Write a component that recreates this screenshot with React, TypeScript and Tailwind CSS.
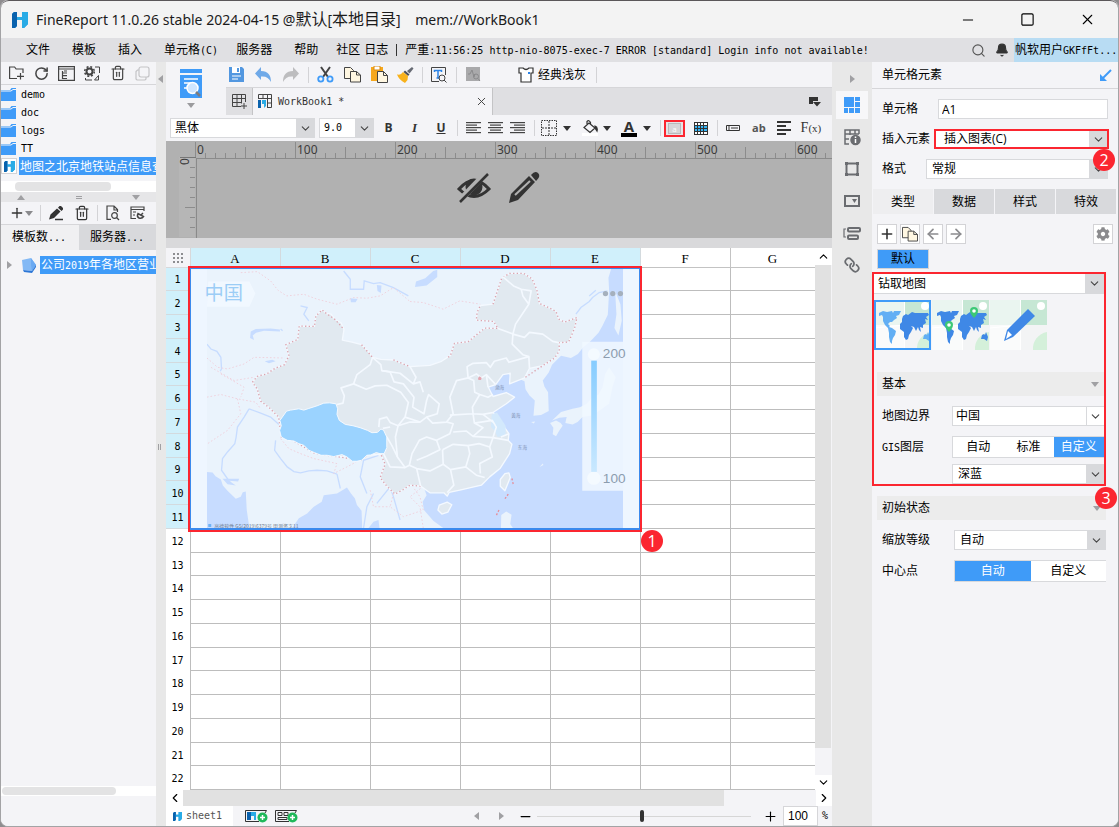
import React from "react";
import { Bell, ChevronDown, ChevronLeft, ChevronRight, ChevronUp, Link, Minus, Plus, RotateCw, Search, Square, Trash2, X, ArrowLeft, ArrowRight } from "lucide-react";
import { FaCog } from "react-icons/fa";

const MONO = "font-['DejaVu_Sans_Mono','Noto_Sans_CJK_SC',monospace] text-[10px]";

const Sep = () => <span className="h-4 w-px shrink-0 bg-[#d3d3d6]" />;

function Caret({ className = "" }: { className?: string }) {
  return (
    <svg width="8" height="5" viewBox="0 0 8 5" className={`shrink-0 ${className}`} aria-hidden>
      <path d="M0 0h8L4 5z" fill="currentColor" />
    </svg>
  );
}

function SideCaret({ left = false }: { left?: boolean }) {
  return (
    <svg width="5" height="8" viewBox="0 0 5 8" className="shrink-0 text-[#a0a0a3]" aria-hidden>
      <path d={left ? "M5 0v8L0 4z" : "M0 0v8l5-4z"} fill="currentColor" />
    </svg>
  );
}

function Logo({ size }: { size: number }) {
  return (
    <svg width={size} height={size} viewBox="0 0 16 16" aria-hidden>
      <path d="M0 2l2-2h3v5h5V0h6v12l-4 4h-2V8H5v6l-2 2H0z" fill="#1593dc" />
      <path d="M0 2l2-2h3v14l-2 2H0z" fill="#0a62ad" />
      <path d="M5 5h5V0h6v12l-4 4h-2V8H5z" fill="#29abe6" />
    </svg>
  );
}

function CopyIcon({ size = 17 }: { size?: number }) {
  return (
    <svg width={size} height={size} viewBox="0 0 17 17" fill="#fff7e2" stroke="#444" aria-hidden>
      <path d="M.5 1.500h6l3 3v8h-9z" />
      <path d="M6.500 5.500h6l4 3.500v7h-10z" />
      <path d="M12.500 5.500v3.500h4" fill="none" />
    </svg>
  );
}

function FolderIcon() {
  return (
    <svg width="15" height="13" viewBox="0 0 15 13" className="shrink-0" aria-hidden>
      <path d="M0 2h9l1.500-2H15v13H0z" fill="#3f9bf8" />
      <path d="M0 3h10l2-1.500h3" stroke="#f4f4f7" fill="none" />
    </svg>
  );
}

function Lines({ align }: { align: "left" | "center" | "right" }) {
  const rows = [15, 11, 15, 11, 15];
  return (
    <svg width="15" height="12" viewBox="0 0 15 12" aria-hidden>
      {rows.map((w, i) => {
        const x = align === "left" ? 0 : align === "right" ? 15 - w : (15 - w) / 2;
        return <rect key={i} x={x} y={i * 2.5} width={w} height="1.200" fill="#444" />;
      })}
    </svg>
  );
}

function Dropdown({ id, label, options, box = "bg-[#d8d9dc]", pad = "pl-1", className = "h-5 border" }: {
  id: string; label?: string; options: string[]; box?: string; pad?: string; className?: string;
}) {
  return (
    <div className={`relative flex border-[#d8d9dc] bg-white ${className}`}>
      <select id={id} aria-label={label} className={`w-full min-w-0 appearance-none bg-transparent pr-5 outline-none ${pad}`}>
        {options.map((o) => <option key={o}>{o}</option>)}
      </select>
      <span className={`pointer-events-none absolute inset-y-0 right-0 flex w-[18px] items-center justify-center ${box}`}>
        <ChevronDown size={13} strokeWidth={2} className="text-[#444]" />
      </span>
    </div>
  );
}

function Badge({ n, className }: { n: number; className: string }) {
  return (
    <span className={`absolute z-20 flex size-[22px] items-center justify-center rounded-full bg-[#fb2630] font-['Open_Sans',sans-serif] text-base leading-none text-white ${className}`}>
      {n}
    </span>
  );
}

/* ---------- title + menu ---------- */

function TitleBar() {
  return (
    <header className="flex h-[38px] items-center rounded-t-lg border-t border-[#5a5759] bg-[#f3f3f3] pl-[11px] pr-[22px]">
      <Logo size={16} />
      <h1 className="ml-2 whitespace-pre font-['Noto_Sans','Noto_Sans_CJK_SC',sans-serif] text-[14px] text-[#1b1b1b]">
        FineReport 11.0.26 stable 2024-04-15 @<span className="text-[16px]">默认</span>[<span className="text-[16px]">本地目录</span>]    mem://WorkBook1
      </h1>
      <div className="ml-auto flex items-center gap-[44px]">
        <button aria-label="最小化"><Minus size={16} strokeWidth={1.5} /></button>
        <button aria-label="最大化"><Square size={15} strokeWidth={1.8} /></button>
        <button aria-label="关闭"><X size={17} strokeWidth={1.5} /></button>
      </div>
    </header>
  );
}

function MenuBar() {
  return (
    <nav className="flex h-6 items-center bg-[#e0e0e3] pl-[25px]">
      <div className="flex items-center gap-[22px] whitespace-nowrap">
        <button>文件</button>
        <button>模板</button>
        <button>插入</button>
        <button className="-mr-1">单元格<span className={MONO}>(C)</span></button>
        <button>服务器</button>
        <button>帮助</button>
        <button className="-ml-1">社区</button>
      </div>
      <button className="ml-1 whitespace-nowrap">日志</button>
      <span className="ml-2 h-3 w-px bg-[#333]" />
      <p className="ml-2 truncate">
        严重<span className={MONO}>:11:56:25 http-nio-8075-exec-7 ERROR [standard] Login info not available!</span>
      </p>
      <div className="ml-auto flex h-full shrink-0 items-center">
        <button aria-label="搜索"><Search size={15} strokeWidth={1.8} className="text-[#555]" /></button>
        <button aria-label="通知" className="ml-[9px] mr-[5px]"><Bell size={14} className="fill-[#333] text-[#333]" /></button>
        <button className="h-full w-[104px] overflow-hidden whitespace-nowrap bg-[#b8dcf3] pl-px text-left">
          帆软用户<span className={MONO}>GKFfFt...</span>
        </button>
      </div>
    </nav>
  );
}

/* ---------- left side ---------- */

function LeftPanel() {
  return (
    <aside className="flex w-[155px] shrink-0 flex-col overflow-hidden bg-[#f4f4f7]">
      <div className="flex h-[23px] items-center gap-[9px] border-b border-[#d6d6d9] px-2 text-[#444]">
        <button aria-label="新建文件夹">
          <svg width="16" height="14" viewBox="0 0 16 14" fill="none" stroke="#444" strokeWidth="1.200">
            <path d="M8 12.500H.600V1h5l1.500 2H14V7M11.500 7v6.500M8 10.300h7" />
          </svg>
        </button>
        <button aria-label="刷新"><RotateCw size={15} strokeWidth={2.4} /></button>
        <button aria-label="打开目录">
          <svg width="17" height="15" viewBox="0 0 17 15" fill="none" stroke="#444" strokeWidth="1.200">
            <path d="M.600.600h15.800v13.800H.600zM.600 3h15.800M4.500 5v7.500H9M4.500 7H9M4.500 9.700H9M6 5h3" />
          </svg>
        </button>
        <button aria-label="设置目录">
          <svg width="17" height="15" viewBox="0 0 17 15" fill="none" stroke="#444">
            <circle cx="5.500" cy="5.500" r="3" strokeWidth="2" />
            <circle cx="5.500" cy="5.500" r="4.800" strokeDasharray="2 1.800" strokeWidth="1.500" />
            <path d="M11 1h4.500v6M1.500 12v2H8M14.500 9.500l-4 4.500h4z" />
          </svg>
        </button>
        <button aria-label="删除"><Trash2 size={16} strokeWidth={1.8} /></button>
        <button aria-label="重命名">
          <svg width="15" height="15" viewBox="0 0 15 15" fill="none" stroke="#c3c3c6" strokeWidth="1.200">
            <rect x="4" y="1" width="10" height="10" rx="2" /><path d="M4 4H2.500L1 5.500V13l1 1h8l1-1v-2" />
          </svg>
        </button>
      </div>
      <ul className={MONO}>
        {["demo", "doc", "logs", "TT"].map((name) => (
          <li key={name} className="flex h-[18px] items-center gap-[5px] pt-px"><FolderIcon />{name}</li>
        ))}
        <li className="flex h-[18px] items-center">
          <span className="flex size-4 shrink-0 items-center justify-center border border-[#d3d3d6] bg-white"><Logo size={11} /></span>
          <span className="ml-[2px] h-[18px] whitespace-nowrap bg-[#3f9bf8] pl-px font-['Noto_Sans_CJK_SC',sans-serif] text-xs leading-[17px] text-white">地图之北京地铁站点信息查询</span>
        </li>
      </ul>
      <div className="mt-[6px] h-[11px] bg-white px-[14px] py-px"><div className="h-[9px] w-24 rounded bg-[#e3e3e4]" /></div>
      <div className="flex h-[10px] items-center justify-between bg-[#e6e6e8] px-4 text-[#a0a0a3]">
        <Caret className="rotate-180" /><span className="h-[3px] w-[6px] border-y border-[#a0a0a3]" /><Caret />
      </div>
      <div className="flex h-[22px] items-center px-2 text-[#333]">
        <button aria-label="添加数据集" className="flex items-center"><Plus size={16} strokeWidth={2} /><Caret className="text-[#8a8a8d]" /></button>
        <span className="ml-[7px] flex"><Sep /></span>
        <button aria-label="编辑" className="ml-2">
          <svg width="15" height="15" viewBox="0 0 15 15" fill="#333">
            <path d="M0 13.500l1.500-5L8 2.500l3.500 3L5 12zM9 1.700L10.500 0H12l2 2v1.500L12.500 5zM6 12.800h8v1.400H6z" />
          </svg>
        </button>
        <button aria-label="删除数据集" className="ml-[10px]"><Trash2 size={16} strokeWidth={1.8} /></button>
        <span className="ml-[7px] flex"><Sep /></span>
        <button aria-label="预览" className="ml-[8px]">
          <svg width="14" height="16" viewBox="0 0 14 16" fill="none" stroke="#444" strokeWidth="1.200">
            <path d="M5 14.400H1V1h7l3.500 3.500V7M8 1v4h3" /><circle cx="8.500" cy="10.500" r="2.800" /><path d="M10.500 12.500l2.500 2.500" />
          </svg>
        </button>
        <button aria-label="数据源" className="ml-[10px]">
          <svg width="15" height="14" viewBox="0 0 15 14" fill="none" stroke="#444" strokeWidth="1.200">
            <path d="M6 12.500H1V1h13v4M1 3.500h13M3 6h3M3 9h2" /><path d="M13 7l-2 2M8 7.500q-1.500 3 1 4.500 3 1 4.500-1.500z" strokeWidth="1.500" />
          </svg>
        </button>
      </div>
      <div className="flex h-[26px] border-t border-[#d6d6d9]" role="tablist">
        <button role="tab" aria-selected="true" className="w-[78px] whitespace-nowrap bg-[#f0f0f2] pl-[11px] text-left">模板数<span className={MONO}>...</span></button>
        <button role="tab" aria-selected="false" className="flex-1 whitespace-nowrap bg-[#d8d9dc] pl-[11px] text-left">服务器<span className={MONO}>...</span></button>
      </div>
      <div className="mt-[6px] flex h-[18px] items-center pl-[6px]">
        <SideCaret />
        <svg width="16" height="16" viewBox="0 0 16 16" className="ml-[9px] shrink-0" aria-hidden>
          <path d="M1 3l9-2 5 7-4 6-9-1z" fill="#83b9f5" /><path d="M10 1l5 7-4 6-1-6z" fill="#6aa9f2" /><path d="M2 13l9 1 4-6v2l-4 6-8-1z" fill="#2c76d6" />
        </svg>
        <span className="ml-[3px] h-[18px] whitespace-nowrap bg-[#3f9bf8] pl-px leading-[17px] text-white">公司<span className={MONO}>2019</span>年各地区营业额</span>
      </div>
      <div className="min-h-[511px] flex-1" />
      <div className="h-[10px] bg-white px-px py-px"><div className="h-2 w-[114px] rounded bg-[#e3e3e4]" /></div>
      <div className="h-[30px]" />
    </aside>
  );
}

/* ---------- toolbars ---------- */

function MainToolbar() {
  return (
    <div className="flex h-[25px] items-center">
      <button aria-label="保存" className="ml-[2px]">
        <svg width="17" height="17" viewBox="0 0 17 17">
          <path d="M1 1h13l2 2v13H1z" fill="#5297e0" /><path d="M4 1h8v6H4z" fill="#fff" /><path d="M9 2h2v4H9z" fill="#5297e0" /><path d="M4 10h9M4 13h6" stroke="#fff" />
        </svg>
      </button>
      <button aria-label="撤销" className="ml-[10px]">
        <svg width="17" height="15" viewBox="0 0 17 15"><path d="M6 0v4c7 0 10 4 10 11-2-4-5-6-10-5.500V13L0 6.500z" fill="#6fa9e8" /></svg>
      </button>
      <button aria-label="重做" className="ml-[10px] mr-[9px]">
        <svg width="17" height="15" viewBox="0 0 17 15"><path d="M11 0v4C4 4 1 8 1 15c2-4 5-6 10-5.500V13l6-6.500z" fill="#bdbdbf" /></svg>
      </button>
      <Sep />
      <button aria-label="剪切" className="ml-2">
        <svg width="17" height="17" viewBox="0 0 17 17" fill="none">
          <path d="M4 1l7 10M13 1L6 11" stroke="#444" strokeWidth="2" />
          <circle cx="3.800" cy="13" r="2.600" stroke="#3f9bf8" strokeWidth="1.800" /><circle cx="13" cy="13" r="2.600" stroke="#3f9bf8" strokeWidth="1.800" />
        </svg>
      </button>
      <button aria-label="复制" className="ml-[10px]"><CopyIcon /></button>
      <button aria-label="粘贴" className="ml-[10px]">
        <svg width="17" height="17" viewBox="0 0 17 17">
          <path d="M0 1h12v14H0z" fill="#f6a81c" /><path d="M3 0h6v4H3z" fill="#fff" stroke="#d98a10" />
          <path d="M6.500 5.500h6l4 4v7h-10z" fill="#fff7e2" stroke="#444" /><path d="M12.500 5.500v4h4" fill="none" stroke="#444" />
        </svg>
      </button>
      <button aria-label="格式刷" className="ml-[9px] mr-2">
        <svg width="17" height="17" viewBox="0 0 17 17">
          <path d="M10 5l5-4 1.500 1.500-4 5z" fill="#666a73" /><path d="M8 4.500l4.500 4L11 10 6.500 6z" fill="#4b4f57" /><path d="M6 6l5 4-.500 4L8 17Q2 14 0 8.500c3 .5 4.500-.5 6-2.500z" fill="#f8b21c" />
        </svg>
      </button>
      <Sep />
      <button aria-label="查找" className="ml-2 mr-[9px]">
        <svg width="16" height="16" viewBox="0 0 16 16" fill="none" stroke="#444">
          <path d="M8 14.500H.500V.500h14V8" /><path d="M3.500 5V3.500h7V5M7 3.500V11M5.500 11h3" stroke="#2b83e6" strokeWidth="1.500" /><circle cx="11" cy="11" r="3" /><path d="M13 13l2.500 2.500" />
        </svg>
      </button>
      <Sep />
      <button aria-label="性能" className="ml-[9px]">
        <svg width="15" height="15" viewBox="0 0 15 15" fill="none">
          <path d="M0 0h14v14H0z" fill="#a9a9ab" /><path d="M2 7h2l2-4 2 7 1-3" stroke="#8a8a8c" /><circle cx="10" cy="9.500" r="2.500" stroke="#8a8a8c" /><path d="M12 11.500l2 2.500" stroke="#8a8a8c" />
        </svg>
      </button>
      <button className="ml-[37px] mr-[10px] flex items-center gap-1 whitespace-nowrap">
        <svg width="16" height="16" viewBox="0 0 16 16" fill="#fff" stroke="#333" strokeWidth="1.200">
          <path d="M1 1h4q3 3 6 0h4v5h-2v9H3V6H1z" /><path d="M10 6h2" stroke="#2b83e6" strokeWidth="2" />
        </svg>
        经典浅灰
      </button>
      <Sep />
    </div>
  );
}

function WorkbookTabs() {
  return (
    <div className="flex h-7 items-stretch border-t border-[#d6d6d9] bg-[#dfdfe2]">
      <button aria-label="新建模板" className="flex w-[27px] items-center justify-center border-r border-[#c4c4c6]">
        <svg width="15" height="15" viewBox="0 0 15 15" fill="none" stroke="#444"><path d="M9 12.500H.500V.500h13V8M.500 4.500h13M.500 8.500H9M5 .500v12M9.500.500v9M12 9v6M9 12h6" /></svg>
      </button>
      <div className="flex w-[240px] items-center border-r border-[#c4c4c6] bg-[#f4f4f7] pl-[5px]">
        <svg width="14" height="15" viewBox="0 0 14 15" fill="none" stroke="#444" aria-hidden>
          <path d="M.500 5V.500h13v13H9M.500 4.500h13M9 9h4.500M5 .500v4M9.500.500V13" /><path d="M0 6h3v8H0z" fill="#0a62ad" stroke="none" /><path d="M4 6h4v6l-2 2v-4H4z" fill="#29abe6" stroke="none" />
        </svg>
        <span className={`ml-[6px] text-[#333] ${MONO}`}>WorkBook1 *</span>
        <button aria-label="关闭标签" className="ml-auto mr-1"><X size={13} strokeWidth={1.8} className="text-[#444]" /></button>
      </div>
      <button aria-label="标签列表" className="ml-auto mr-[11px]">
        <svg width="12" height="10" viewBox="0 0 12 10" fill="#333"><path d="M0 0h9v4H4v3H0zM4 5h8l-4 4.500z" /></svg>
      </button>
    </div>
  );
}

function FormatBar() {
  return (
    <div className="flex h-[26px] items-center pl-1 text-[#333]">
      <Dropdown id="font" label="字体" options={["黑体"]} className="h-5 w-[145px] border text-black" />
      <Dropdown id="size" label="字号" options={["9.0"]} className="ml-1 h-5 w-[55px] border font-['DejaVu_Sans_Mono',monospace] text-[10px] text-black" />
      <button aria-label="加粗" className="ml-[10px] w-[9px] font-['Open_Sans',sans-serif] text-[12px] font-bold">B</button>
      <button aria-label="斜体" className="ml-[17px] w-[9px] font-['Liberation_Serif',serif] text-[13px] font-bold italic">I</button>
      <button aria-label="下划线" className="ml-[17px] w-[10px] font-['Open_Sans',sans-serif] text-[12px] font-bold underline">U</button>
      <span className="ml-[11px] mr-2 flex"><Sep /></span>
      <div className="flex gap-[7px]">
        <button aria-label="左对齐"><Lines align="left" /></button>
        <button aria-label="居中"><Lines align="center" /></button>
        <button aria-label="右对齐"><Lines align="right" /></button>
      </div>
      <span className="ml-[9px] mr-[6px] flex"><Sep /></span>
      <button aria-label="边框" className="flex items-center gap-[6px]">
        <svg width="16" height="16" viewBox="0 0 16 16" fill="none" stroke="#333"><path d="M.500.500h15v15H.500z" strokeDasharray="1.500 1" /><path d="M8 1v14M1 8h14" strokeDasharray="2 1" /></svg>
        <Caret />
      </button>
      <button aria-label="背景色" className="ml-[11px] flex items-center gap-[5px]">
        <svg width="16" height="16" viewBox="0 0 16 16" fill="none" stroke="#333" strokeWidth="1.200"><path d="M0 13h16v3H0z" fill="#fff" stroke="none" /><path d="M7 3l6 5-5 4.500L2 7.500zM5 5V1.500q2-2 3.500 1V5" /><path d="M13 6q3 1 2 5l-2-3z" fill="#333" /></svg>
        <Caret />
      </button>
      <button aria-label="字体颜色" className="ml-[10px] flex items-center gap-[6px]">
        <span className="w-4 border-b-4 border-black text-center font-['Open_Sans',sans-serif] text-[15px] leading-[13px] font-bold">A</span>
        <Caret />
      </button>
      <span className="ml-[9px] mr-[3px] flex"><Sep /></span>
      <button aria-label="合并单元格" className="flex h-[17px] w-[21px] items-center justify-center border-2 border-[#fb2630] bg-[#e4e4e6]">
        <span className="h-[11px] w-[13px] border border-[#b9b9bb] bg-[#d6d6d8] text-center text-[8px] leading-[9px] text-white">a</span>
      </button>
      <button aria-label="表格" className="ml-[9px]">
        <svg width="14" height="13" viewBox="0 0 14 13">
          <path d="M0 0h14v13H0z" fill="#333" />
          {[1, 4, 7, 10].map((y) => [1, 4, 7, 10].map((x) => (
            <rect key={`${x}-${y}`} x={x} y={y} width={x === 10 ? 3 : 2} height="2" fill={y === 1 || y === 10 ? "#fff" : "#35b5f5"} />
          )))}
        </svg>
      </button>
      <span className="ml-[9px] mr-[8px] flex"><Sep /></span>
      <button aria-label="控件">
        <svg width="14" height="6" viewBox="0 0 14 6" fill="none" stroke="#333"><path d="M.500.500h13v5H.500zM3 1v4M5 3h7" /></svg>
      </button>
      <button aria-label="文本" className="ml-3 font-['Open_Sans',sans-serif] text-[11px] font-bold text-[#555]">ab</button>
      <button aria-label="段落" className="ml-[11px]">
        <svg width="14" height="14" viewBox="0 0 14 14" stroke="#333" strokeWidth="2"><path d="M0 1h14M0 5h9M0 9h14M0 13h9" /></svg>
      </button>
      <button aria-label="公式" className="ml-[10px] font-['Liberation_Serif',serif] text-[14px]">F<span className="text-[11px]">(x)</span></button>
    </div>
  );
}

/* ---------- parameter pane with rulers ---------- */

function RulerPane() {
  const ticks = Array.from({ length: 200 }, (_, i) => i);
  return (
    <div className="h-[97px] overflow-hidden bg-[#b1b1b1]">
      <svg width="100%" height="97" aria-hidden>
        <path d="M13 16H29V96H13z" fill="#b6b6b6" />
        <g stroke="#8c8c8c">
          {ticks.map((i) => (
            <path key={i} d={`M${29.5 + i * 10} ${i % 10 === 0 ? 1 : i % 5 === 0 ? 6 : 12}V17`} />
          ))}
          {[1, 2, 3, 4, 5, 6, 7].map((i) => (
            <path key={i} d={`M${i === 5 ? 19 : 24} ${16.5 + i * 10}H29`} />
          ))}
          <path d="M14 16.500H30" stroke="#777" />
          <path d="M30 17.500H3000M30.500 17V97" stroke="#8a8a8a" />
        </g>
        <g fill="#3c3c3c" fontFamily="Noto Sans, sans-serif" fontSize="12">
          {[0, 100, 200, 300, 400, 500, 600, 700, 800, 900, 1000].map((n) => (
            <text key={n} x={31 + n} y="13">{n}</text>
          ))}
          <text transform="translate(23 17) rotate(-90)" textAnchor="end">0</text>
        </g>
        <g transform="translate(291 31)" fill="none" stroke="#333" strokeWidth="3">
          <path d="M2 17Q17 0 32 17Q17 32 2 17z" />
          <circle cx="17" cy="15" r="7" fill="#333" />
          <path d="M30 0L3 28" stroke="#b1b1b1" strokeWidth="6" /><path d="M31 2L3 30" strokeWidth="2.500" />
        </g>
        <g transform="translate(342 31)" fill="#333">
          <path d="M1 31l2-9L21 4l6 6L10 28zM23 3q4-5 7-2t-1 7l-1 1z" /><path d="M7 23L22 9" stroke="#b1b1b1" strokeWidth="2" />
        </g>
      </svg>
    </div>
  );
}

/* ---------- chart ---------- */

const CHINA = "M275 425L290 407 318 400 345 382 372 372 385 345 376 312 412 296 416 256 462 257 466 226 485 207 498 218 512 220 524 236 542 246 551 266 546 298 575 304 604 312 622 330 637 350 662 356 700 358 750 378 810 374 845 362 872 344 884 308 925 303 958 276 975 262 1015 263 1002 242 950 238 952 215 962 194 1000 190 1014 148 1026 112 1050 97 1092 97 1118 114 1132 146 1140 188 1168 200 1190 212 1198 235 1216 244 1253 230 1246 262 1228 304 1199 306 1200 330 1186 352 1150 375 1110 383 1095 412 1050 430 1052 398 1030 402 1008 432 986 440 1000 468 1040 456 1065 470 1040 490 1000 516 1024 546 1048 580 1046 600 1057 612 1050 640 1022 684 990 710 965 735 900 750 868 757 862 768 852 758 810 758 782 738 750 735 730 748 705 762 680 738 660 712 675 672 662 642 620 645 588 665 556 650 500 645 460 638 400 602 362 590 354 530 326 502 300 482 290 446z";
const TIBET = "M358 540L378 512 390 509 415 505 430 509 445 504 470 496 490 488 507 487 527 490 532 505 530 522 537 540 555 552 578 556 600 562 622 570 635 577 652 576 662 566 670 569 680 590 680 622 672 640 660 640 648 637 632 644 620 645 604 660 590 663 576 663 560 650 545 643 520 649 500 645 482 645 462 637 445 630 430 615 415 610 400 602 380 600 362 590 357 570 362 556z";

// the outline without the coast, where the frontier is dashed in red
const FRONTIER = "M275 425L290 407 318 400 345 382 372 372 385 345 376 312 412 296 416 256 462 257 466 226 485 207 498 218 524 236 551 266M604 312L637 350M700 358L750 378M865 350L872 344 884 308 925 303 958 276 975 262 1015 263 1002 242 950 238 952 215 962 194M1000 190L1014 148 1026 112 1050 97 1092 97 1118 114 1132 146 1140 188 1168 200 1190 212 1198 235 1216 244 1253 230 1246 262 1228 304 1199 306 1200 330 1186 352 1150 375 1095 412M782 738L750 735 730 748 705 762 680 738 660 712 675 672 662 642M604 660L500 645 460 638 400 602 362 590 354 530 326 502 300 482 290 446 275 425";

const BORDERS = [
  "M637 350L630 372 590 402 580 430 542 442 552 466 548 488 530 492",
  "M580 430L618 446 645 436 680 434 722 455 745 486 735 530 714 556 690 546 680 530 658 536 656 560",
  "M637 350L662 372 665 390 690 394 702 424 730 430 762 470 758 500 792 520 800 480 806 462 838 490 832 520 800 530",
  "M665 390L720 398 760 430 780 424 790 455M750 378L768 410 760 430",
  "M735 530L780 545 800 530 818 548 860 545 880 520 870 470 890 420 925 412 922 378 940 368 980 366 992 380 1004 362 1040 352 1048 365 1108 348",
  "M925 412L942 420 945 455 960 462 938 500 940 520 870 524M960 462L985 470 1000 462M940 520L970 522 1000 516",
  "M925 412L950 400 965 412 980 402 985 440M980 402L1008 432",
  "M680 590L695 615 712 650 735 682 748 675 756 640 778 600 800 590 830 600 870 580 880 550 862 545",
  "M670 640L690 680 735 682M748 675L770 685 782 738M770 660L800 648 840 628 830 600M770 685L810 692 850 672 848 628",
  "M848 628L880 612 925 616 930 640 918 680 872 688 850 672M872 688L882 735 862 757M918 680L950 705 975 712",
  "M925 616L958 610 990 620 998 650 960 670 962 700M990 620L1000 592 1046 600M1000 592L940 588 920 572 880 575",
  "M940 520L944 548 970 562 940 588M944 548L998 540 1010 560 1000 592M970 522L1000 545M1024 590L1048 580",
  "M1015 263L1060 280 1068 250 1108 190 1090 165 1085 145 1062 135 1030 108M1108 190L1115 150 1085 145",
  "M1060 280L1095 290 1110 275 1150 280 1180 302 1199 306M1060 280L1058 310 1090 342 1108 348 1110 383",
  "M714 556L750 545 780 545M714 556L706 590 712 650M668 564L690 560",
];

const WATER = [
  "M138 310L150 325 168 332 180 350 182 385 178 392M360 265L366 270",
  "M265 505L250 530 230 560 226 590 222 610 200 635 185 655 182 690 210 730M265 505L300 518 330 530 355 552",
  "M345 600L342 630 360 655 380 680 400 694 420 698 445 692 470 690 500 692 530 702M530 702L540 745",
  "M420 195L440 200 430 220 445 240M550 90L570 115 570 145 610 145 612 120 640 128 660 125 700 140 745 165",
  "M620 760L600 710 610 660 655 645M640 760L620 800 610 864M650 790L690 740 700 770 720 840",
  "M1250 220L1265 200 1290 182 1300 170 1320 155 1345 150M1290 165L1310 148",
];

const HAZY = [
  "M240 95L290 92 330 120 352 148 378 165 430 160 470 175 530 190 580 170 620 172 660 165 700 140 750 182",
  "M138 352L170 380 200 385 250 370 280 350 372 352M138 470L180 462 230 475 285 485 300 505",
  "M230 475L240 520 200 570 140 610M750 182L790 185 850 205 900 180 962 190",
  "M360 595L385 625 420 640 460 655 530 670 520 700 560 680 620 648M700 760L690 800 730 830 790 810 780 770 760 742",
  "M790 738L750 770 780 800 790 864M630 750L640 800 690 800M150 380L220 420 280 410M180 400L250 440 240 470",
];

function MapChart() {
  return (
    <svg viewBox="90 84 1350 780" preserveAspectRatio="none" className="block size-full" role="img" aria-label="中国">
      <defs>
        <linearGradient id="legend-bar" x1="0" y1="0" x2="0" y2="1">
          <stop offset="0%" stopColor="#86ccff" />
          <stop offset="100%" stopColor="#c9e8ff" />
        </linearGradient>
        <clipPath id="tiles"><path d="M138 84H1392V864H138z" /></clipPath>
      </defs>
      <path d="M90 84H1440V864H90z" fill="#eef6ff" />
      <g clipPath="url(#tiles)">
        <path d="M138 84H1392V864H138z" fill="#eaf3fc" />
        <g fill="#c7dcff">
          <path d="M138 695L155 697 164 708 180 718 186 736 200 752 225 776 240 770 246 756 255 754 258 810 266 864H138z" />
          <path d="M395 864L415 835 440 820 460 800 484 785 490 765 530 760 560 742 572 760 584 775 590 795 604 812 606 864zM625 864L640 845 655 840 658 864z" />
          <path d="M790 738L800 765 788 785 792 810 820 842 850 864H1392V84H1356L1348 110 1350 150 1346 222 1330 255 1318 276 1290 305 1272 320 1256 340 1235 352 1205 345 1178 372 1168 396 1150 420 1155 438 1166 455 1168 512 1145 524 1122 526 1126 480 1110 465 1098 446 1095 422 1000 380 900 560z" />
          <path d="M765 138L800 134 832 108 832 86 820 90 796 112 768 122zM312 362L335 357 345 362 325 368z" />
          <path d="M570 172L592 174 586 184 572 184zM650 132L664 134 662 156 652 150z" />
          <path d="M268 292L270 272 285 265 330 263 358 266 358 272 310 270 286 276 276 284 280 298z" />
          <path d="M185 716L235 716 232 724 205 722 225 736 200 732z" />
        </g>
        <g fill="none" stroke="#c7dcff" strokeWidth="4">{WATER.map((d) => <path key={d} d={d} />)}</g>
        <g fill="none" stroke="#efd3de" strokeWidth="3" strokeDasharray="5 6">{HAZY.map((d) => <path key={d} d={d} />)}</g>
        <g fill="#eaf3fc">
          <path d="M1172 548L1190 540 1204 548 1210 556 1200 570 1190 588 1180 582 1182 562zM1178 540L1205 515 1240 505 1262 500 1282 490 1300 470 1318 462 1330 440 1338 400 1350 380 1370 410 1360 440 1350 490 1300 525 1270 530 1255 545 1240 552 1218 548 1222 530 1200 532z" />
          <path d="M1368 150L1384 190 1388 240 1378 284 1366 262 1372 220z" />
          <path d="M1025 825L1040 814 1056 824 1052 852 1060 864 1024 864zM1115 545l12-2-4 6zM1140 680l10-10 2 4z" />
        </g>
        <g fill="#e1e9f0" stroke="#f4f9ff" strokeWidth="4" strokeLinejoin="round">
          <path d={CHINA} />
          <path d="M1048 698L1052 712 1036 752 1022 738 1022 718 1036 700z" />
          <path d="M838 795L862 786 876 794 864 816 846 822 834 810z" />
        </g>
        <path d="M996 522L1012 516 1038 556 1038 584 1014 590 1004 570 994 560z" fill="#d3e9fc" />
        <path d={FRONTIER} fill="none" stroke="#dba3ae" strokeWidth="4" strokeDasharray="4 7" />
        <g fill="none" stroke="#f4f9ff" strokeWidth="5" strokeLinejoin="round">{BORDERS.map((d) => <path key={d} d={d} />)}</g>
        <path d={TIBET} fill="#9bd3ff" stroke="#f4f9ff" strokeWidth="3" />
        <path d="M1057 715L1062 736M1046 762L1036 776M1018 810L1010 826" stroke="#e58f9b" strokeWidth="4" strokeDasharray="6 5" />
        <g fill="#7f93b5" fontSize="14" fontFamily="Noto Sans CJK SC, sans-serif">
          <text x="1006" y="446">渤海</text><text x="1055" y="529">黄海</text><text x="1075" y="627">东海</text>
        </g>
        <path d="M955 412l5-5 6 5-2 6h-8z" fill="#e3a5b0" />
        <path d="M142 122H266L284 158 266 198H138z" fill="#f1f8ff" />
        <path d="M1269 303H1392V752H1269z" fill="#f1f8ff" fillOpacity=".85" />
        <text x="160" y="863" fontSize="15" fill="#6d7a8c" fontFamily="Noto Sans CJK SC, sans-serif">高德软件 GS(2019)6379号 甲测资字11</text>
        <path d="M142 852h9v9h-9z" fill="#6fb2f5" />
      </g>
      <text x="131" y="178" fontSize="58" fill="#9ccdf6" fontFamily="Noto Sans CJK SC, sans-serif">中国</text>
      <circle cx="1304" cy="341" r="18" fill="#f4faff" /><circle cx="1304" cy="714" r="20" fill="#f4faff" />
      <path d="M1296 360H1313V695H1296z" fill="url(#legend-bar)" />
      <g fill="#8c9cae" fontSize="41" fontFamily="Liberation Sans, sans-serif"><text x="1331" y="352">200</text><text x="1331" y="728">100</text></g>
      <g fill="#a5b0bd"><circle cx="1339" cy="158" r="8" /><circle cx="1361" cy="158" r="8" /><circle cx="1384" cy="158" r="8" /></g>
    </svg>
  );
}

/* ---------- sheet ---------- */

const COLS = ["A", "B", "C", "D", "E", "F", "G"];
const ROWS = Array.from({ length: 22 }, (_, i) => i);

function Sheet() {
  return (
    <div className="flex bg-white">
      <div className="relative min-w-0 flex-1 overflow-hidden">
        <table className="w-full table-fixed border-separate border-spacing-0">
          <colgroup>
            <col className="w-[25px]" />
            {COLS.map((c) => <col key={c} className={c === "G" ? "" : "w-[90px]"} />)}
          </colgroup>
          <thead>
            <tr className="h-5 font-['Liberation_Serif',serif] text-[13px] leading-none">
              <th className="border-b border-r border-[#d8d8da] bg-[#f4f4f7] p-0" aria-label="全选">
                <svg width="10" height="10" viewBox="0 0 10 10" className="mx-auto" fill="#8d8d90">
                  {[0, 4, 8].map((y) => [0, 4, 8].map((x) => <path key={`${x}-${y}`} d={`M${x} ${y}h2v2h-2z`} />))}
                </svg>
              </th>
              {COLS.map((c, i) => (
                <th key={c} className={`border-b border-r p-0 pr-px pt-px font-normal ${i < 5 ? "border-[#d3dade] bg-[#d0f0fb]" : "border-[#c3c3c3] bg-white"} ${c === "G" ? "border-r-0" : ""}`}>{c}</th>
              ))}
            </tr>
          </thead>
          <tbody>
            {ROWS.map((r) => (
              <tr key={r} className={r % 4 === 0 ? "h-[23px]" : "h-6"}>
                <th scope="row" className={`border-r p-0 pr-px pt-[2px] font-['DejaVu_Sans_Mono',monospace] text-[10px] leading-none font-normal ${r < 11 ? "border-b border-[#d3dade] bg-[#d0f0fb]" : "border-[#bdbdbd] bg-white"}`}>{r + 1}</th>
                {COLS.map((c) => <td key={c} className={`border-b border-[#bdbdbd] p-0 ${c === "G" ? "" : "border-r"}`} />)}
              </tr>
            ))}
          </tbody>
        </table>
        <div className="absolute left-[22px] top-[18px] h-[266px] w-[454px] border-2 border-[#fb2630]">
          <div className="size-full border border-b-2 border-[#3b8aed]"><MapChart /></div>
        </div>
        <Badge n={1} className="left-[475px] top-[282px]" />
      </div>
      <div className="flex w-[17px] shrink-0 flex-col bg-[#f4f4f7]">
        <button aria-label="向上滚动" className="flex h-[17px] items-center justify-center bg-white"><ChevronUp size={13} /></button>
        <div className="mr-px flex-1 bg-[#e1e1e1]" />
        <div className="h-[27px]" />
        <button aria-label="向下滚动" className="flex h-[15px] items-center justify-center bg-white"><ChevronDown size={13} /></button>
      </div>
    </div>
  );
}

function AddIcon({ report = false }: { report?: boolean }) {
  return (
    <svg width="23" height="14" viewBox="0 0 23 14" fill="none" aria-hidden>
      <path d="M14 12.500H.500V1.500h21L20 4" stroke="#333" />
      {report
        ? <path d="M3 3.500h4v3H3zM9 3.500h4v3H9zM3 8.500h9v2H3z" stroke="#333" />
        : <><path d="M2 3h4v8H2z" fill="#0a62ad" /><path d="M6 3h5v8H9V7H6z" fill="#29abe6" /></>}
      <circle cx="17.500" cy="8.500" r="5" fill="#1fb95a" /><path d="M17.500 6v5M15 8.500h5" stroke="#fff" strokeWidth="1.500" />
    </svg>
  );
}

function SheetFooter() {
  return (
    <>
      <div className="flex h-4 bg-[#f4f4f7]">
        <button aria-label="向左滚动" className="flex w-[17px] items-center justify-center bg-white"><ChevronLeft size={14} /></button>
        <div className="flex-1 bg-[#e1e1e1]" />
        <div className="w-[92px]" />
        <button aria-label="向右滚动" className="flex w-4 items-center justify-center bg-white"><ChevronRight size={14} /></button>
      </div>
      <div className="flex h-5 items-center">
        <button className={`flex h-full w-[67px] items-center gap-1 bg-white pl-[7px] text-[#555] ${MONO}`}><Logo size={9} />sheet1</button>
        <button aria-label="新增普通报表" className="ml-3"><AddIcon /></button>
        <button aria-label="新增决策报表" className="ml-[7px]"><AddIcon report /></button>
        <div className="ml-auto flex items-center">
          <button aria-label="上一页"><SideCaret left /></button>
          <button aria-label="下一页" className="ml-5"><SideCaret /></button>
          <button aria-label="缩小" className="ml-[14px]"><Minus size={15} strokeWidth={2} /></button>
          <input
            type="range"
            aria-label="缩放"
            defaultValue={49}
            className="ml-1 h-px w-[214px] appearance-none bg-[#d6d6d6] [&::-webkit-slider-thumb]:h-3 [&::-webkit-slider-thumb]:w-1 [&::-webkit-slider-thumb]:appearance-none [&::-webkit-slider-thumb]:rounded-sm [&::-webkit-slider-thumb]:bg-[#333]"
          />
          <button aria-label="放大" className="ml-3"><Plus size={15} strokeWidth={1.8} /></button>
          <input id="zoom" defaultValue="100" className="ml-[5px] h-5 w-[35px] border border-[#d6d6d9] bg-white pl-1 font-['Liberation_Sans',sans-serif] text-[12px]" />
          <label htmlFor="zoom" className={`ml-1 mr-1 ${MONO}`}>%</label>
        </div>
      </div>
    </>
  );
}

function Workspace() {
  return (
    <main className="flex min-w-0 flex-1 flex-col bg-[#f4f4f7]">
      <div className="flex">
        <button aria-label="预览模板" className="flex w-[60px] shrink-0 flex-col items-center pr-[10px] pt-[7px]">
          <svg width="22" height="29" viewBox="0 0 22 29">
            <path d="M0 0h22v4H0zM0 6h22v23H0z" fill="#3f9bf8" /><path d="M4 10h14M4 14h9M4 19h3" stroke="#fff" strokeWidth="1.500" />
            <circle cx="12.500" cy="19" r="5.500" fill="#cfe6ff" stroke="#fff" strokeWidth="1.500" /><path d="M16 23l4 4" stroke="#7c7c80" strokeWidth="2.500" />
          </svg>
          <Caret className="mt-[5px] text-[#9b9b9e]" />
        </button>
        <div className="min-w-0 flex-1">
          <MainToolbar />
          <WorkbookTabs />
        </div>
      </div>
      <FormatBar />
      <RulerPane />
      <div className="h-[10px] bg-[#d9d9db]" />
      <Sheet />
      <SheetFooter />
    </main>
  );
}

/* ---------- right side ---------- */

function IconStrip() {
  return (
    <div className="flex w-10 shrink-0 flex-col items-center bg-[#e8e8e8] pt-[12px]">
      <button aria-label="收起" className="flex h-[9px] items-center"><SideCaret /></button>
      <div className="mt-2 flex flex-col items-center gap-1">
        <button aria-label="单元格元素" className="flex h-7 w-8 items-center justify-center bg-[#f7f7f9]">
          <svg width="16" height="16" viewBox="0 0 16 16" fill="#3f9bf8"><path d="M0 0h10v10H0zM11 0h5v4h-5zM11 5h5v5h-5zM0 11h4v5H0zM5 11h5v5H5zM11 11h5v5h-5z" /></svg>
        </button>
        <button aria-label="单元格属性" className="flex h-7 w-8 items-center justify-center">
          <svg width="17" height="17" viewBox="0 0 17 17" fill="none" stroke="#6a6c70" strokeWidth="1.500"><path d="M5 15H1V1h14v4M1 5h14M1 10h4M6 1v5M11 1v4" /><circle cx="11.500" cy="11" r="4.500" fill="#6a6c70" /><path d="M11.500 10v4M11.500 7.500v1.500" stroke="#fff" /></svg>
        </button>
        <button aria-label="悬浮元素" className="flex h-7 w-8 items-center justify-center">
          <svg width="16" height="16" viewBox="0 0 16 16" fill="none" stroke="#6a6c70" strokeWidth="2"><path d="M2.500 2.500h11v11h-11z" /><path d="M1 1h3v3H1zM12 1h3v3h-3zM1 12h3v3H1zM12 12h3v3h-3z" fill="#6a6c70" stroke="none" /></svg>
        </button>
        <button aria-label="控件设置" className="flex h-7 w-8 items-center justify-center">
          <svg width="16" height="12" viewBox="0 0 16 12" fill="none" stroke="#6a6c70" strokeWidth="2"><path d="M1 1h14v10H1z" /><path d="M8 4h5l-2.500 4z" fill="#6a6c70" stroke="none" /></svg>
        </button>
        <button aria-label="条件属性" className="flex h-7 w-8 items-center justify-center">
          <svg width="18" height="13" viewBox="0 0 18 13" fill="none" stroke="#6a6c70" strokeWidth="2"><rect x="5" y="1" width="12" height="3.500" rx="1" /><rect x="5" y="8.500" width="10" height="3.500" rx="1" /><path d="M3 2H1v8h2" strokeWidth="1.200" /></svg>
        </button>
        <button aria-label="超级链接" className="flex h-7 w-8 items-center justify-center"><Link size={16} strokeWidth={2.6} className="rotate-90 text-[#6a6c70]" /></button>
      </div>
    </div>
  );
}

function Continents({ west, east }: { west: string; east: string }) {
  return (
    <>
      <path d="M5 13L9 11 13 12 18 11 19 13 20 11 27 11 25 15 22 16 23 18 20 20 18 22 16 22 14 24 16 26 15 27 18 28 22 31 21 35 19 38 18 41 18 44 16 42 15 37 15 33 14 28 11 25 9 21 9 17 8 15 5 16z" fill={west} />
      <path d="M28 19L29 16 32 14 34 15 38 12 41 13 54 13 55 15 52 17 54 20 51 19 52 23 49 25 49 28 46 27 47 32 45 30 44 27 42 31 40 27 37 26 39 28 37 32 35 35 34 39 32 40 30 37 30 32 26 29 26 24 28 22z" fill={east} />
      <path d="M49 39L50 35 52 34 53 35 54 32 56 37 55 41 52 39z" fill={west} />
    </>
  );
}

function Pin({ x, y }: { x: number; y: number }) {
  return (
    <g transform={`translate(${x} ${y})`}>
      <path d="M0 7Q-4 3-4 0A4 4 0 014 0Q4 3 0 7z" fill="#3cc876" /><circle r="1.800" fill="#fff" />
    </g>
  );
}

function Thumb({ kind, selected = false }: { kind: "area" | "point" | "custom"; selected?: boolean }) {
  const names = { area: "区域地图", point: "点地图", custom: "自定义地图" };
  return (
    <button aria-label={names[kind]} aria-pressed={selected} className={`h-[50px] w-[57px] ${selected ? "outline-2 -outline-offset-2 outline-[#3f9bf8]" : ""}`}>
      <svg width="57" height="50" viewBox="0 0 57 50">
        <path d="M0 0h57v50H0z" fill="#fafbfb" /><path d="M0 0h31v25H0z" fill="#eaf5f0" /><path d="M31 0h26v25H31z" fill="#c6e7d4" /><path d="M31 25h26v25H31z" fill="#f3f4f5" />
        <path d="M57 32a17 17 0 00-14 18h14z" fill="#d4f0da" /><path d="M30.500 0v50M0 28L31 25" stroke="#fff" />
        <circle cx="51" cy="6" r="4" fill="#fff" />
        {kind === "custom"
          ? <><path d="M38 9l7 7-22 21-9 4 3-11z" fill="#3f88e6" /><path d="M16 39l2-8 4 4z" fill="#fff" /></>
          : <Continents west={kind === "area" ? "#62aff4" : "#3f88e6"} east="#3f88e6" />}
        {kind === "point" && <><Pin x={17} y={25} /><Pin x={42} y={11} /></>}
      </svg>
    </button>
  );
}

function SectionHead({ children }: { children: React.ReactNode }) {
  return (
    <button className="flex h-6 w-full items-center justify-between bg-[#ececec] pl-[5px] pr-[5px] text-left">{children}<Caret className="text-[#a0a0a3]" /></button>
  );
}

function SquareButton({ label, children, className = "" }: { label: string; children: React.ReactNode; className?: string }) {
  return <button aria-label={label} className={`flex size-5 items-center justify-center border border-[#d3d3d6] bg-white text-[#8b8b8e] ${className}`}>{children}</button>;
}

function PropertyPanel() {
  const tabs = ["类型", "数据", "样式", "特效"];
  return (
    <aside className="w-[246px] shrink-0 bg-[#f4f4f7]">
      <div className="flex h-[27px] items-center justify-between border-b border-[#d6d6d9] pl-[10px] pr-[6px]">
        <h2>单元格元素</h2>
        <button aria-label="弹出">
          <svg width="12" height="12" viewBox="0 0 12 12" fill="none" stroke="#3f9bf8" strokeWidth="2"><path d="M11 1L3 9" /><path d="M0 5v7h7z" fill="#3f9bf8" stroke="none" /></svg>
        </button>
      </div>

      <div className="flex flex-col gap-[10px] pl-[10px] pr-[10px] pt-[10px]">
        <div className="flex h-5 items-center">
          <label htmlFor="cell" className="w-14">单元格</label>
          <input id="cell" defaultValue="A1" className="h-5 min-w-0 flex-1 border border-[#d8d9dc] bg-white px-[3px]" />
        </div>
        <div className="flex h-5 items-center">
          <label htmlFor="insert" className="w-[52px] whitespace-nowrap">插入元素</label>
          <div className="-mr-px flex-1 border-2 border-[#fb2630]">
            <Dropdown id="insert" options={["插入图表(C)"]} pad="pl-2 leading-4" className="h-4" />
          </div>
        </div>
        <div className="relative flex h-5 items-center">
          <label htmlFor="format" className="w-11">格式</label>
          <Dropdown id="format" options={["常规"]} pad="pl-[5px]" className="h-5 flex-1 border" />
          <Badge n={2} className="-right-[7px] -top-[10px]" />
        </div>
      </div>

      <div role="tablist" className="mt-[10px] flex h-[25px] gap-px pl-px pr-[2px]">
        {tabs.map((t, i) => (
          <button key={t} role="tab" aria-selected={i === 0} className={`flex-1 ${i === 0 ? "bg-[#eeeef0]" : "bg-[#d8d9dc]"}`}>{t}</button>
        ))}
      </div>

      <div className="mt-[10px] flex gap-[3px] px-[5px]">
        <SquareButton label="新增图表"><Plus size={16} strokeWidth={2.4} className="text-[#333]" /></SquareButton>
        <SquareButton label="复制图表"><CopyIcon size={16} /></SquareButton>
        <SquareButton label="前移"><ArrowLeft size={16} strokeWidth={2.6} /></SquareButton>
        <SquareButton label="后移"><ArrowRight size={16} strokeWidth={2.6} /></SquareButton>
        <SquareButton label="设置" className="ml-auto"><FaCog size={14} /></SquareButton>
      </div>
      <button className="ml-[5px] mt-[5px] block h-5 w-[52px] border border-[#d3d3d6] bg-[#3f9bf8] leading-[18px]">默认</button>

      <section className="relative mr-3 mt-[3px] h-[214px] border-2 border-[#fb2630]">
        <Dropdown id="chart" label="图表类型" options={["钻取地图"]} pad="pl-1" className="h-5 border-b border-r" />
        <div className="mt-[6px] flex gap-px"><Thumb kind="area" selected /><Thumb kind="point" /><Thumb kind="custom" /></div>
        <div className="ml-[3px] mt-[22px]"><SectionHead>基本</SectionHead></div>
        <div className="mt-[10px] flex items-center pl-2">
          <label htmlFor="edge" className="w-[70px]">地图边界</label>
          <Dropdown id="edge" options={["中国"]} box="bg-white border-l border-[#d8d9dc]" pad="pl-[3px]" className="h-5 flex-1 border-y border-l" />
        </div>
        <div className="mt-[10px] flex h-[22px] items-center pl-2">
          <span className="w-[70px]"><span className={MONO}>GIS</span>图层</span>
          <div className="flex h-full flex-1 border border-r-0 border-[#d8d9dc] bg-white">
            <button className="flex-1">自动</button><button className="flex-1">标准</button><button className="flex-1 bg-[#3f9bf8] text-white">自定义</button>
          </div>
        </div>
        <div className="mt-[6px] pl-[78px]">
          <Dropdown id="layer" label="图层样式" options={["深蓝"]} pad="pl-[5px]" className="h-5 border-y border-l" />
        </div>
        <Badge n={3} className="-right-[13px] top-[213px]" />
      </section>

      <section className="pl-[5px] pr-3">
        <div className="mt-[10px]"><SectionHead>初始状态</SectionHead></div>
        <div className="mt-[10px] flex items-center pl-[5px]">
          <label htmlFor="level" className="w-[72px]">缩放等级</label>
          <Dropdown id="level" options={["自动"]} pad="pl-[5px]" className="h-5 flex-1 border" />
        </div>
        <div className="mt-[10px] flex h-[22px] items-center pl-[5px]">
          <span className="w-[72px]">中心点</span>
          <div className="flex h-full flex-1 border border-r-0 border-[#d8d9dc] bg-white">
            <button className="flex-1 bg-[#3f9bf8] text-white">自动</button><button className="flex-1">自定义</button>
          </div>
        </div>
      </section>
    </aside>
  );
}

export default function App() {
  return (
    <div className="flex min-h-screen flex-col bg-[#8f8d8f] font-['Open_Sans','Noto_Sans_CJK_SC',sans-serif] text-xs leading-4 text-black">
      <div className="flex flex-1 flex-col overflow-hidden rounded-lg border-x border-b border-[#a3a3a5] bg-[#f4f4f7]">
        <TitleBar />
        <MenuBar />
        <div className="flex flex-1">
          <LeftPanel />
          <div className="flex w-[10px] shrink-0 flex-col items-start bg-[#e8e8e8]">
            <button aria-label="收起左侧" className="ml-[2px] mt-3 h-[10px]"><SideCaret left /></button>
            <span className="ml-[2px] mt-[360px] h-[6px] w-[3px] border-x border-[#a0a0a3]" />
          </div>
          <Workspace />
          <IconStrip />
          <PropertyPanel />
        </div>
      </div>
    </div>
  );
}
